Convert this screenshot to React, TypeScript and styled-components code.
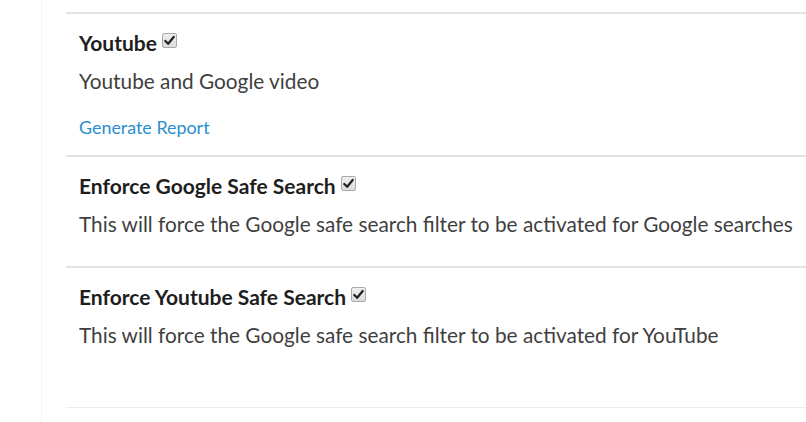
import React from 'react';
import styled, { createGlobalStyle } from 'styled-components';

const GlobalStyle = createGlobalStyle`
    html, body {
        margin: 0;
        padding: 0;
        background: #ffffff;
        font-family: Lato, "Open Sans", sans-serif;
    }
`;

// Outer frame: narrow gutter on the left with a faint rule
const Page = styled.div`
    display: flex;
    flex-direction: row;
    width: 806px;
    height: 422px;
    overflow: hidden;
`;

const Gutter = styled.div`
    width: 41px;
    flex-shrink: 0;
    border-right: 1px solid #f4f4f4;
`;

const Content = styled.div`
    flex: 1;
    padding: 12px 0 0 24px;
`;

const Section = styled.div<{ $height: number }>`
    box-sizing: border-box;
    height: ${p => p.$height}px;
    padding: 17px 0 0 13px;
    border-top: 2px solid #e3e3e3;
`;

const BottomRule = styled.div`
    border-top: 1px solid #ececec;
`;

const Title = styled.div`
    display: flex;
    align-items: center;
    gap: 5px;
    font-size: 21px;
    font-weight: 700;
    color: #1e1e1e;
    line-height: 24px;
    white-space: nowrap;
`;

const Description = styled.p`
    margin: 14px 0 0;
    font-size: 20.8px;
    color: #3f3f3f;
    line-height: 24px;
    white-space: nowrap;
`;

const ReportLink = styled.a`
    display: inline-block;
    margin-top: 23px;
    font-size: 17.9px;
    color: #2a8ecf;
    text-decoration: none;
    line-height: 22px;
    cursor: pointer;
`;

const CheckBox = styled.span`
    display: inline-flex;
    align-items: center;
    justify-content: center;
    box-sizing: border-box;
    width: 15px;
    height: 15px;
    margin-top: -5px;
    border: 1px solid #a9a9a9;
    border-radius: 2px;
    background: linear-gradient(#eeeeee, #dcdcdc);
`;

const Check = () => (
    <CheckBox>
        <svg width="11" height="11" viewBox="0 0 10 10">
            <path d="M1.2 5.4 L3.8 8 L8.8 1.8" fill="none" stroke="#222" strokeWidth="2" strokeLinecap="round" strokeLinejoin="round" />
        </svg>
    </CheckBox>
);

const settings = [
    {
        title: 'Enforce Google Safe Search',
        text: 'This will force the Google safe search filter to be activated for Google searches',
        height: 111,
    },
    {
        title: 'Enforce Youtube Safe Search',
        text: 'This will force the Google safe search filter to be activated for YouTube',
        height: 141,
    },
];

const App = () => {
    return (
        <>
            <GlobalStyle />
            <Page>
                <Gutter />
                <Content>
                    <Section $height={143}>
                        <Title>Youtube <Check /></Title>
                        <Description>Youtube and Google video</Description>
                        <ReportLink>Generate Report</ReportLink>
                    </Section>
                    {settings.map(s => (
                        <Section key={s.title} $height={s.height}>
                            <Title>{s.title} <Check /></Title>
                            <Description>{s.text}</Description>
                        </Section>
                    ))}
                    <BottomRule />
                </Content>
            </Page>
        </>
    );
};

export default App;
